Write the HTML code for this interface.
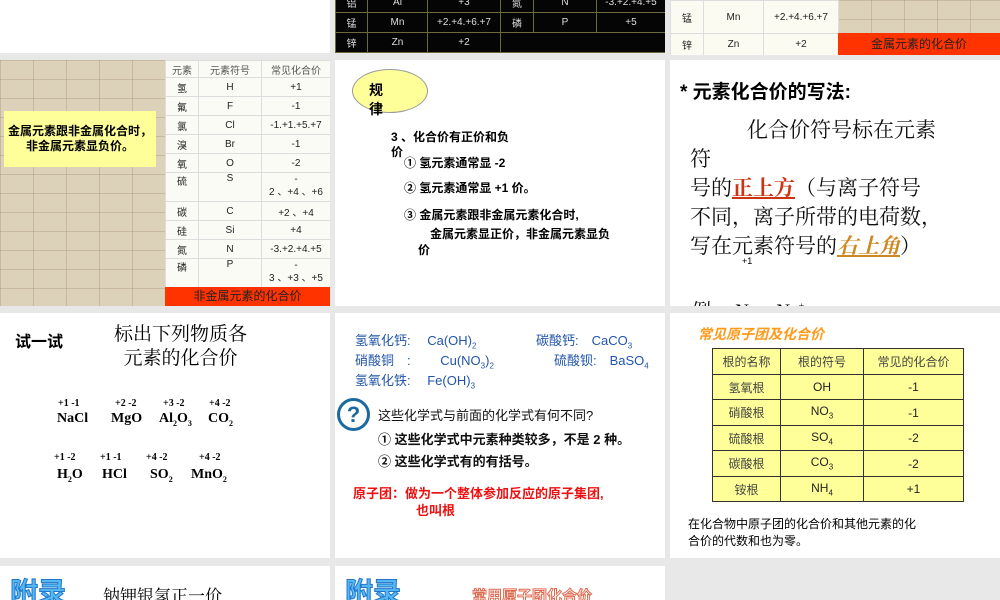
<!DOCTYPE html>
<html><head><meta charset="utf-8"><style>
*{margin:0;padding:0;box-sizing:border-box}
body{width:1000px;height:600px;background:#e8e8e8;position:relative;overflow:hidden;font-family:"Liberation Sans","Noto Sans CJK SC",sans-serif}
.s{position:absolute;background:#fff;overflow:hidden}
.a{position:absolute;white-space:nowrap}
table{border-collapse:collapse;position:absolute;table-layout:fixed}
td{text-align:center;padding:0;overflow:hidden;white-space:nowrap}
.tex{background-color:#dcd1b9;background-image:linear-gradient(90deg,rgba(150,130,100,.3) 1px,transparent 1px),linear-gradient(rgba(150,130,100,.3) 1px,transparent 1px);background-size:33px 19px}
.serif{font-family:"Liberation Serif","Noto Serif CJK SC",serif}
sub{font-size:8px}
</style></head><body>

<!-- row 0 -->
<div class="s" style="left:0;top:0;width:330px;height:53px"></div>
<div class="s" style="left:335px;top:0;width:330px;height:53px;background:#050505">
<table style="left:0;top:-8px;width:330px;color:#ddd;font-size:10px">
<colgroup><col width="32"><col width="60"><col width="73"><col width="33"><col width="63"><col width="69"></colgroup>
<tr style="height:20px"><td style="border:1px solid #6b6a3a">铝</td><td style="border:1px solid #6b6a3a">Al</td><td style="border:1px solid #6b6a3a">+3</td><td style="border:1px solid #6b6a3a">氮</td><td style="border:1px solid #6b6a3a">N</td><td style="border:1px solid #6b6a3a">-3.+2.+4.+5</td></tr>
<tr style="height:20px"><td style="border:1px solid #6b6a3a">锰</td><td style="border:1px solid #6b6a3a">Mn</td><td style="border:1px solid #6b6a3a">+2.+4.+6.+7</td><td style="border:1px solid #6b6a3a">磷</td><td style="border:1px solid #6b6a3a">P</td><td style="border:1px solid #6b6a3a">+5</td></tr>
<tr style="height:20px"><td style="border:1px solid #6b6a3a">锌</td><td style="border:1px solid #6b6a3a">Zn</td><td style="border:1px solid #6b6a3a">+2</td><td colspan="3" style="border:1px solid #6b6a3a"></td></tr>
</table></div>
<div class="s" style="left:670px;top:0;width:330px;height:55px">
<div class="tex" style="position:absolute;left:168px;top:0;width:162px;height:55px"></div>
<table style="left:0;top:0;width:168px;font-size:10px;background:#fbfbf1;color:#222">
<colgroup><col width="33"><col width="60"><col width="75"></colgroup>
<tr style="height:33px"><td style="border:1px solid #ddd">锰</td><td style="border:1px solid #ddd">Mn</td><td style="border:1px solid #ddd">+2.+4.+6.+7</td></tr>
<tr style="height:22px"><td style="border:1px solid #ddd">锌</td><td style="border:1px solid #ddd">Zn</td><td style="border:1px solid #ddd">+2</td></tr>
</table>
<div class="a" style="left:168px;top:33px;width:162px;height:22px;background:#ff3300;color:#222;font-size:12px;text-align:center;line-height:22px">金属元素的化合价</div>
</div>

<!-- row 1 -->
<div class="s" style="left:0;top:60px;width:330px;height:246px">
<div class="tex" style="position:absolute;left:0;top:0;width:165px;height:246px"></div>
<table style="left:165px;top:0;width:165px;font-size:10px;background:#fbfbf6;color:#222">
<colgroup><col width="33"><col width="63"><col width="69"></colgroup>
<tr style="height:17px;color:#555"><td style="border:1px solid #ddd">元素</td><td style="border:1px solid #ddd">元素符号</td><td style="border:1px solid #ddd">常见化合价</td></tr>
<tr style="height:19px"><td style="border:1px solid #ddd">氢</td><td style="border:1px solid #ddd">H</td><td style="border:1px solid #ddd">+1</td></tr>
<tr style="height:19px"><td style="border:1px solid #ddd">氟</td><td style="border:1px solid #ddd">F</td><td style="border:1px solid #ddd">-1</td></tr>
<tr style="height:19px"><td style="border:1px solid #ddd">氯</td><td style="border:1px solid #ddd">Cl</td><td style="border:1px solid #ddd">-1.+1.+5.+7</td></tr>
<tr style="height:19px"><td style="border:1px solid #ddd">溴</td><td style="border:1px solid #ddd">Br</td><td style="border:1px solid #ddd">-1</td></tr>
<tr style="height:19px"><td style="border:1px solid #ddd">氧</td><td style="border:1px solid #ddd">O</td><td style="border:1px solid #ddd">-2</td></tr>
<tr style="height:29px;vertical-align:top"><td style="border:1px solid #ddd">硫</td><td style="border:1px solid #ddd">S</td><td style="border:1px solid #ddd;line-height:13px">-<br>2 、+4 、+6</td></tr>
<tr style="height:19px"><td style="border:1px solid #ddd">碳</td><td style="border:1px solid #ddd">C</td><td style="border:1px solid #ddd">+2 、+4</td></tr>
<tr style="height:19px"><td style="border:1px solid #ddd">硅</td><td style="border:1px solid #ddd">Si</td><td style="border:1px solid #ddd">+4</td></tr>
<tr style="height:19px"><td style="border:1px solid #ddd">氮</td><td style="border:1px solid #ddd">N</td><td style="border:1px solid #ddd">-3.+2.+4.+5</td></tr>
<tr style="height:29px;vertical-align:top"><td style="border:1px solid #ddd">磷</td><td style="border:1px solid #ddd">P</td><td style="border:1px solid #ddd;line-height:13px">-<br>3 、+3 、+5</td></tr>
</table>
<div class="a" style="left:165px;top:227px;width:165px;height:19px;background:#ff3300;color:#222;font-size:12px;text-align:center;line-height:19px">非金属元素的化合价</div>
<div class="a" style="left:4px;top:51px;width:152px;height:56px;background:#ffff99;font-size:12px;font-weight:bold;text-align:center;line-height:15px;padding-top:13px">金属元素跟非金属化合时，<br>非金属元素显负价。</div>
</div>

<div class="s" style="left:335px;top:60px;width:330px;height:246px">
<div class="a" style="left:17px;top:9px;width:76px;height:44px;border-radius:50%;background:#ffff99;border:1px solid #999"></div>
<div class="a" style="left:34px;top:21px;font-size:14px;font-weight:bold;line-height:19px">规<br>律</div>
<div class="a" style="left:56px;top:68px;font-size:12px;font-weight:bold">3 、化合价有正价和负</div>
<div class="a" style="left:56px;top:83px;font-size:12px;font-weight:bold">价</div>
<div class="a" style="left:69px;top:94px;font-size:12px;font-weight:bold">① 氢元素通常显 -2</div>
<div class="a" style="left:69px;top:119px;font-size:12px;font-weight:bold">② 氢元素通常显 +1 价。</div>
<div class="a" style="left:69px;top:146px;font-size:12px;font-weight:bold">③ 金属元素跟非金属元素化合时,</div>
<div class="a" style="left:95px;top:165px;font-size:12px;font-weight:bold">金属元素显正价，非金属元素显负</div>
<div class="a" style="left:83px;top:181px;font-size:12px;font-weight:bold">价</div>
</div>

<div class="s" style="left:670px;top:60px;width:330px;height:246px">
<div class="a" style="left:10px;top:17px;font-size:19px;font-weight:bold">* 元素化合价的写法:</div>
<div class="s" style="background:none;left:20px;top:56px;width:300px;font-size:21px;line-height:29px;font-family:'Liberation Serif','Noto Serif CJK SC',serif;color:#111;white-space:normal">
<div style="padding-left:57px">化合价符号标在元素</div>
<div>符</div>
<div>号的<b style="color:#cc3311;text-decoration:underline">正上方</b>（与离子符号</div>
<div>不同，离子所带的电荷数，</div>
<div>写在元素符号的<b style="color:#cc8822;font-style:italic;text-decoration:underline">右上角</b>）</div>
</div>
<div class="a" style="left:72px;top:196px;font-size:9px">+1</div>
<div class="a serif" style="left:22px;top:236px;font-size:19px">例:　Na　Na<sup style="font-size:10px">+</sup></div>
</div>

<!-- row 2 -->
<div class="s serif" style="left:0;top:313px;width:330px;height:245px">
<div class="a" style="left:15px;top:15px;font-size:16px;font-weight:bold;font-family:'Liberation Sans','Noto Sans CJK SC',sans-serif">试一试</div>
<div class="a" style="left:114px;top:10px;font-size:19px;line-height:24px;text-align:center">标出下列物质各<br>元素的化合价</div>
<div class="a" style="left:58px;top:85px;font-size:10px;font-weight:bold">+1 -1</div>
<div class="a" style="left:115px;top:85px;font-size:10px;font-weight:bold">+2 -2</div>
<div class="a" style="left:163px;top:85px;font-size:10px;font-weight:bold">+3 -2</div>
<div class="a" style="left:209px;top:85px;font-size:10px;font-weight:bold">+4 -2</div>
<div class="a" style="left:57px;top:98px;font-size:14px;font-weight:bold">NaCl</div>
<div class="a" style="left:111px;top:98px;font-size:14px;font-weight:bold">MgO</div>
<div class="a" style="left:159px;top:98px;font-size:14px;font-weight:bold">Al<sub>2</sub>O<sub>3</sub></div>
<div class="a" style="left:208px;top:98px;font-size:14px;font-weight:bold">CO<sub>2</sub></div>
<div class="a" style="left:54px;top:139px;font-size:10px;font-weight:bold">+1 -2</div>
<div class="a" style="left:100px;top:139px;font-size:10px;font-weight:bold">+1 -1</div>
<div class="a" style="left:146px;top:139px;font-size:10px;font-weight:bold">+4 -2</div>
<div class="a" style="left:199px;top:139px;font-size:10px;font-weight:bold">+4 -2</div>
<div class="a" style="left:57px;top:154px;font-size:14px;font-weight:bold">H<sub>2</sub>O</div>
<div class="a" style="left:102px;top:154px;font-size:14px;font-weight:bold">HCl</div>
<div class="a" style="left:150px;top:154px;font-size:14px;font-weight:bold">SO<sub>2</sub></div>
<div class="a" style="left:191px;top:154px;font-size:14px;font-weight:bold">MnO<sub>2</sub></div>
</div>

<div class="s" style="left:335px;top:313px;width:330px;height:245px;color:#2255aa;font-size:13px">
<div class="a" style="left:20px;top:17px">氢氧化钙:　 Ca(OH)<sub>2</sub></div>
<div class="a" style="left:201px;top:17px">碳酸钙:　CaCO<sub>3</sub></div>
<div class="a" style="left:20px;top:37px">硝酸铜　:　 　Cu(NO<sub>3</sub>)<sub>2</sub></div>
<div class="a" style="left:219px;top:37px">硫酸钡:　BaSO<sub>4</sub></div>
<div class="a" style="left:20px;top:57px">氢氧化铁:　 Fe(OH)<sub>3</sub></div>
<div class="a" style="left:2px;top:85px;width:33px;height:33px;border-radius:50%;border:3px solid #1a6aa0;background:#fff;color:#1a6aa0;font-size:22px;font-weight:bold;text-align:center;line-height:27px">?</div>
<div class="a" style="left:43px;top:92px;color:#111;font-size:13px">这些化学式与前面的化学式有何不同?</div>
<div class="a" style="left:43px;top:116px;color:#111;font-size:13px;font-weight:bold">① 这些化学式中元素种类较多，不是 2 种。</div>
<div class="a" style="left:43px;top:138px;color:#111;font-size:13px;font-weight:bold">② 这些化学式有的有括号。</div>
<div class="a" style="left:18px;top:170px;color:#ee1111;font-size:13px;font-weight:bold">原子团：做为一个整体参加反应的原子集团,</div>
<div class="a" style="left:81px;top:187px;color:#ee1111;font-size:13px;font-weight:bold">也叫根</div>
</div>

<div class="s" style="left:670px;top:313px;width:330px;height:245px">
<div class="a" style="left:28px;top:11px;font-size:14px;font-weight:bold;font-style:italic;color:#ff9a1a">常见原子团及化合价</div>
<table style="left:42px;top:35px;width:251px;background:#ffff99;font-size:12px;border:1px solid #333;color:#222">
<colgroup><col width="68"><col width="83"><col width="100"></colgroup>
<tr style="height:26px;color:#444"><td style="border:1px solid #333">根的名称</td><td style="border:1px solid #333">根的符号</td><td style="border:1px solid #333">常见的化合价</td></tr>
<tr style="height:25px"><td style="border:1px solid #333;color:#444">氢氧根</td><td style="border:1px solid #333">OH</td><td style="border:1px solid #333">-1</td></tr>
<tr style="height:26px"><td style="border:1px solid #333;color:#444">硝酸根</td><td style="border:1px solid #333">NO<sub>3</sub></td><td style="border:1px solid #333">-1</td></tr>
<tr style="height:25px"><td style="border:1px solid #333;color:#444">硫酸根</td><td style="border:1px solid #333">SO<sub>4</sub></td><td style="border:1px solid #333">-2</td></tr>
<tr style="height:26px"><td style="border:1px solid #333;color:#444">碳酸根</td><td style="border:1px solid #333">CO<sub>3</sub></td><td style="border:1px solid #333">-2</td></tr>
<tr style="height:25px"><td style="border:1px solid #333;color:#444">铵根</td><td style="border:1px solid #333">NH<sub>4</sub></td><td style="border:1px solid #333">+1</td></tr>
</table>
<div class="a" style="left:18px;top:203px;font-size:12px;line-height:17px">在化合物中原子团的化合价和其他元素的化<br>合价的代数和也为零。</div>
</div>

<!-- row 3 -->
<div class="s" style="left:0;top:566px;width:330px;height:34px">
<div class="a" style="left:10px;top:5px;font-size:28px;font-weight:bold;color:#55b8f0;-webkit-text-stroke:1px #2277cc">附录</div>
<div class="a serif" style="left:103px;top:16px;font-size:17px">钠钾银氢正一价</div>
</div>
<div class="s" style="left:335px;top:566px;width:330px;height:34px">
<div class="a" style="left:10px;top:5px;font-size:28px;font-weight:bold;color:#55b8f0;-webkit-text-stroke:1px #2277cc">附录</div>
<div class="a" style="left:137px;top:19px;font-size:15px;font-weight:bold;color:#fff;-webkit-text-stroke:1px #e06a50">常用原子团化合价</div>
</div>
</body></html>
